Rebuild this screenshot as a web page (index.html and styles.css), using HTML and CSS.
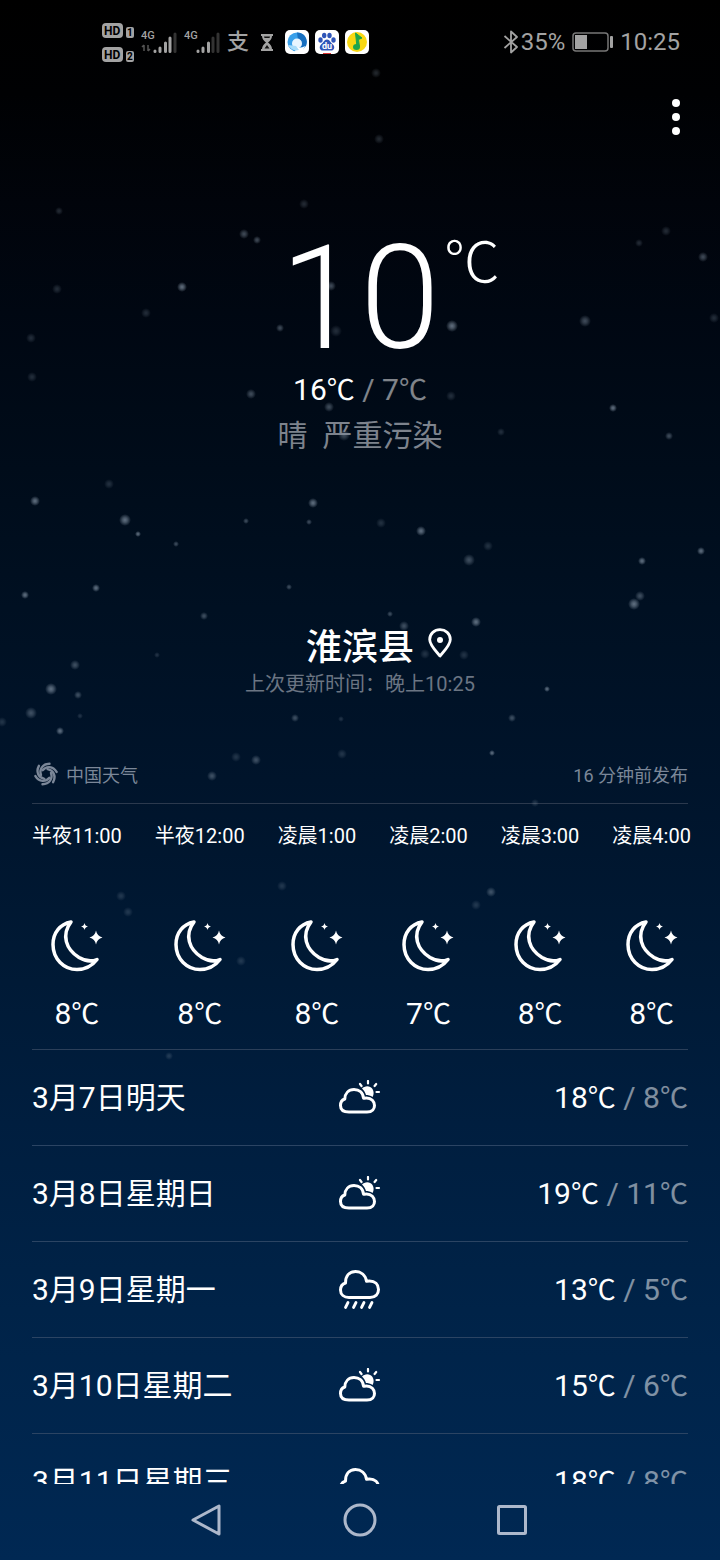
FILE: index.html
```html
<!DOCTYPE html>
<html lang="zh-CN">
<head>
<meta charset="utf-8">
<meta name="viewport" content="width=device-width, initial-scale=1">
<title>天气</title>
<link rel="stylesheet" href="styles.css">
</head>
<body>
<svg class="defs" aria-hidden="true">
  <defs>
    <radialGradient id="glow"><stop offset="0" stop-color="#8292a3"/><stop offset=".4" stop-color="#8292a3" stop-opacity=".7"/><stop offset="1" stop-color="#8292a3" stop-opacity="0"/></radialGradient>
    <symbol id="moon" viewBox="0 0 52 52">
      <path d="M20 2C9 4 2 13 2 24.500C2 39 13 49.500 26 49.500C34 49.500 41 46 46 39.500C40 42 34 41 28 37.500C15 29.500 10 15 20 2Z" fill="none" stroke="#fff" stroke-width="3.500" stroke-linejoin="round"/>
      <path d="M45 10.500Q46 16 51.500 17.500Q46 19 45 24.500Q44 19 38.500 17.500Q44 16 45 10.500Z" fill="#fff"/>
      <path d="M33.500 3Q34 6 37 6.500Q34 7 33.500 10Q33 7 30 6.500Q33 6 33.500 3Z" fill="#fff"/>
    </symbol>
    <symbol id="partly" viewBox="0 0 44 36">
      <path d="M11 32H29C34.500 32 36.500 28.500 36.500 25.500C36.500 21.500 33.500 18 28.500 18C27 18 26 18.200 25.500 18.200C25 12.500 21 9.500 16 9.500C10.500 9.500 7 13.500 6.800 19C3.500 20 2.500 22.500 2.500 25.500C2.500 29.500 5 32 11 32Z" fill="none" stroke="#fff" stroke-width="3" stroke-linejoin="round"/>
      <path d="M24 8.500C26.500 5.500 32 5 34.500 9C36 11.500 36 14.500 34.600 17C32.500 15.500 30 15 28 15C27.300 12.500 26 10.300 24 8.500Z" fill="#fff"/>
      <path d="M30 1V3.500M22 4L23.500 6M38.200 4L36.600 6M38.500 12H41" stroke="#fff" stroke-width="2.200" stroke-linecap="round"/>
    </symbol>
    <path id="cloud-shape" d="M11 28.500H32C37.500 28.500 40.500 25 40.500 20.500C40.500 15.500 37 12 31.500 12C30.500 12 29.500 12 28.500 12.300C27.500 6 23 2.500 17.500 2.500C11 2.500 7.500 7.500 7.500 14C4.500 15 2.500 18 2.500 21C2.500 25.500 6 28.500 11 28.500Z" fill="none" stroke="#fff" stroke-width="3" stroke-linejoin="round"/>
    <symbol id="rain" viewBox="0 0 44 42">
      <use href="#cloud-shape"/>
      <path d="M10 33.500L7.500 38.500M18 33.500L15.500 38.500M26 33.500L23.500 38.500M34 33.500L31.500 38.500" stroke="#fff" stroke-width="2.800" stroke-linecap="round"/>
    </symbol>
    <symbol id="cloud" viewBox="0 0 44 36">
      <use href="#cloud-shape" y="3"/>
    </symbol>
  </defs>
</svg>

<svg class="stars" viewBox="0 0 720 1560" preserveAspectRatio="xMidYMin slice" aria-hidden="true" fill="url(#glow)">
  <g opacity=".75"><circle cx="182" cy="287" r="5"/><circle cx="125" cy="520" r="6"/><circle cx="701" cy="551" r="4"/><circle cx="35" cy="501" r="5"/><circle cx="313" cy="503" r="5"/><circle cx="452" cy="326" r="6"/><circle cx="421" cy="531" r="5"/><circle cx="642" cy="561" r="4"/><circle cx="634" cy="604" r="6"/><circle cx="25" cy="595" r="4"/><circle cx="96" cy="588" r="4"/><circle cx="613" cy="408" r="4"/><circle cx="51" cy="689" r="6"/><circle cx="60" cy="731" r="4"/><circle cx="492" cy="753" r="3"/><circle cx="476" cy="622" r="5"/><circle cx="547" cy="689" r="3"/><circle cx="138" cy="534" r="3"/></g>
  <g opacity=".5"><circle cx="244" cy="234" r="5"/><circle cx="257" cy="240" r="4"/><circle cx="585" cy="321" r="6"/><circle cx="703" cy="257" r="5"/><circle cx="251" cy="394" r="5"/><circle cx="329" cy="407" r="5"/><circle cx="344" cy="435" r="6"/><circle cx="331" cy="286" r="5"/><circle cx="469" cy="560" r="6"/><circle cx="640" cy="596" r="5"/><circle cx="176" cy="544" r="3"/><circle cx="246" cy="521" r="3"/><circle cx="309" cy="522" r="3"/><circle cx="289" cy="587" r="3"/><circle cx="204" cy="616" r="4"/><circle cx="75" cy="665" r="5"/><circle cx="78" cy="695" r="4"/><circle cx="512" cy="718" r="4"/><circle cx="295" cy="718" r="4"/><circle cx="212" cy="776" r="5"/><circle cx="256" cy="760" r="5"/><circle cx="31" cy="713" r="6"/><circle cx="669" cy="436" r="4"/><circle cx="280" cy="328" r="4"/><circle cx="390" cy="614" r="3"/><circle cx="404" cy="626" r="5"/><circle cx="491" cy="892" r="5"/></g>
  <g opacity=".28"><circle cx="376" cy="73" r="5"/><circle cx="379" cy="139" r="5"/><circle cx="59" cy="211" r="4"/><circle cx="304" cy="204" r="5"/><circle cx="666" cy="231" r="5"/><circle cx="639" cy="243" r="4"/><circle cx="57" cy="289" r="5"/><circle cx="146" cy="313" r="5"/><circle cx="31" cy="338" r="5"/><circle cx="32" cy="377" r="5"/><circle cx="336" cy="331" r="6"/><circle cx="109" cy="484" r="5"/><circle cx="381" cy="523" r="5"/><circle cx="488" cy="546" r="5"/><circle cx="236" cy="757" r="5"/><circle cx="342" cy="754" r="5"/><circle cx="341" cy="719" r="3"/><circle cx="157" cy="655" r="3"/><circle cx="80" cy="716" r="3"/><circle cx="425" cy="654" r="5"/><circle cx="2" cy="722" r="5"/><circle cx="535" cy="803" r="4"/><circle cx="476" cy="905" r="5"/><circle cx="282" cy="886" r="5"/><circle cx="121" cy="896" r="5"/><circle cx="128" cy="912" r="5"/><circle cx="169" cy="1056" r="4"/><circle cx="451" cy="396" r="5"/><circle cx="464" cy="655" r="5"/><circle cx="714" cy="318" r="5"/><circle cx="501" cy="432" r="4"/><circle cx="241" cy="961" r="5"/></g>
</svg>

<header class="status">
  <div class="status-group">
    <svg class="hd" viewBox="0 0 32 40" width="32" height="40" aria-label="HD 1 HD 2">
      <rect x="0" y="1" width="21" height="15" rx="4" fill="#a3a3a3"/><text x="2" y="13" class="hd-text">HD</text>
      <rect x="24" y="5" width="8" height="11" rx="2" fill="#a3a3a3"/><text x="25" y="14" class="hd-num">1</text>
      <rect x="0" y="25" width="21" height="15" rx="4" fill="#a3a3a3"/><text x="2" y="37" class="hd-text">HD</text>
      <rect x="24" y="29" width="8" height="11" rx="2" fill="#a3a3a3"/><text x="25" y="38" class="hd-num">2</text>
    </svg>
    <svg class="signal" viewBox="0 0 36 24" width="36" height="24">
      <text x="0" y="9" class="net">4G</text>
      <g stroke-width="3" stroke-linecap="round" stroke="#a3a3a3"><path d="M14 21V21.500M19 18V21.500M24.500 13V21.500M29 8V21.500"/><path d="M34 4V21.500" stroke="#333"/></g>
      <path d="M3 15V21M7 15V21M1 17L3 15M9 19L7 21" stroke="#555" fill="none" stroke-width="1.500"/>
    </svg>
    <svg class="signal" viewBox="0 0 36 24" width="36" height="24">
      <text x="0" y="9" class="net">4G</text>
      <g stroke-width="3" stroke-linecap="round" stroke="#a3a3a3"><path d="M14 21V21.500M19 18V21.500M24.500 13V21.500"/><path d="M29 8V21.500M34 4V21.500" stroke="#333"/></g>
    </svg>
    <span class="pay">支</span>
    <svg class="glass" viewBox="0 0 12 17" width="12" height="17"><path d="M0 0H12V2H11C11 5 9 7 7 8.500C9 10 11 12 11 15H12V17H0V15H1C1 12 3 10 5 8.500C3 7 1 5 1 2H0Z" fill="#a3a3a3"/><path d="M3 2.500H9L8.500 4H3.500ZM6 11L8.500 14.500H3.500Z" fill="#111"/></svg>
    <div class="apps">
      <svg viewBox="0 0 24 24" width="24" height="24"><rect width="24" height="24" rx="5" fill="#fff"/><circle cx="12" cy="12" r="9.500" fill="#3aa0ea"/><path d="M12 2.500A9.500 9.500 0 0 1 21 16Q18 18 14 17Z" fill="#176fc0"/><circle cx="12" cy="13.500" r="5" fill="#e8f5ff"/><path d="M11 17Q16 19 20 16L17 22H10Z" fill="#fff"/><path d="M3 15Q7 22 14 20L11 16Z" fill="#a8dcfa"/></svg>
      <svg viewBox="0 0 24 24" width="24" height="24"><rect width="24" height="24" rx="5" fill="#fff"/><g fill="#2f55b8"><ellipse cx="5.500" cy="10" rx="2.200" ry="2.800"/><ellipse cx="9.200" cy="5.500" rx="2.200" ry="2.800"/><ellipse cx="14.500" cy="5.500" rx="2.200" ry="2.800"/><ellipse cx="18.500" cy="10" rx="2.200" ry="2.800"/><path d="M12 9.500C9 9.500 8.500 13 6 14.500C3.500 17 5 21 8.500 20.500H15.500C19 21 20.500 17 18 14.500C15.500 13 15 9.500 12 9.500Z"/></g><text x="7" y="19" class="du">du</text><path d="M8 23.500H16" stroke="#d33"/></svg>
      <svg viewBox="0 0 24 24" width="24" height="24"><rect width="24" height="24" rx="5" fill="#fff"/><circle cx="12" cy="12" r="10" fill="#f8d813"/><path d="M10.500 3L17 8L13.500 9.500L14.500 17H12Z" fill="#1ca54c" stroke="#1ca54c" stroke-linejoin="round"/><ellipse cx="11.500" cy="17" rx="3.500" ry="3" fill="#1ca54c"/></svg>
    </div>
  </div>
  <div class="status-group">
    <svg class="bt" viewBox="0 0 16 24" width="16" height="24"><path d="M1.500 6L14 17L8 22.500V1.500L14 7L1.500 18" fill="none" stroke="#a3a3a3" stroke-width="1.800" stroke-linejoin="round"/></svg>
    <span class="percent">35%</span>
    <svg class="battery" viewBox="0 0 41 20" width="41" height="20"><rect x="1" y="1" width="35" height="18" rx="3" fill="none" stroke="#777" stroke-width="1.500"/><rect x="3" y="3" width="12" height="14" fill="#a3a3a3"/><rect x="38" y="4" width="3" height="12" rx="1" fill="#a3a3a3"/></svg>
    <time class="clock">10:25</time>
  </div>
</header>

<div class="toolbar">
  <button class="more" aria-label="更多"><svg viewBox="0 0 8 38" width="8" height="38" fill="#fff"><circle cx="4" cy="5" r="4"/><circle cx="4" cy="19" r="4"/><circle cx="4" cy="33" r="4"/></svg></button>
</div>

<main class="weather">
  <section class="current">
    <h1 class="temp">10<span class="unit">℃</span></h1>
    <p class="range">16<span class="c">℃</span> <span class="dim">/ 7<span class="c">℃</span></span></p>
    <p class="condition">晴  严重污染</p>
  </section>

  <section class="place">
    <h2 class="city">淮滨县<svg class="pin" viewBox="0 0 24 30" width="24" height="30"><path d="M12 28C7 22 1.700 17 1.700 11.500C1.700 5.500 6.500 1.700 12 1.700S22.300 5.500 22.300 11.500C22.300 17 17 22 12 28Z" fill="none" stroke="#fff" stroke-width="2.800" stroke-linejoin="round"/><circle cx="12" cy="12" r="3" fill="#fff"/></svg></h2>
    <p class="updated">上次更新时间：晚上10:25</p>
  </section>

  <section class="source">
    <span class="provider">
      <svg viewBox="0 0 24 24" width="24" height="24" fill="none" stroke="#7b8798" stroke-width="2.400" stroke-linecap="round">
        <path id="arm" d="M7 13C5 7.500 8.500 2 15.500 1.800"/>
        <use href="#arm" transform="rotate(60 12 12)"/><use href="#arm" transform="rotate(120 12 12)"/><use href="#arm" transform="rotate(180 12 12)"/><use href="#arm" transform="rotate(240 12 12)"/><use href="#arm" transform="rotate(300 12 12)"/>
      </svg>
      中国天气
    </span>
    <span>16 分钟前发布</span>
  </section>

  <ul class="hours">
    <li><time>半夜11:00</time><svg class="moon"><use href="#moon"/></svg><span class="deg">8<span class="c">℃</span></span></li>
    <li><time>半夜12:00</time><svg class="moon"><use href="#moon"/></svg><span class="deg">8<span class="c">℃</span></span></li>
    <li><time>凌晨1:00</time><svg class="moon"><use href="#moon"/></svg><span class="deg">8<span class="c">℃</span></span></li>
    <li><time>凌晨2:00</time><svg class="moon"><use href="#moon"/></svg><span class="deg">7<span class="c">℃</span></span></li>
    <li><time>凌晨3:00</time><svg class="moon"><use href="#moon"/></svg><span class="deg">8<span class="c">℃</span></span></li>
    <li><time>凌晨4:00</time><svg class="moon"><use href="#moon"/></svg><span class="deg">8<span class="c">℃</span></span></li>
  </ul>

  <ul class="days">
    <li><span>3月7日明天</span><svg class="sky"><use href="#partly"/></svg><span class="temps">18<span class="c">℃</span> <span class="dim">/ 8<span class="c">℃</span></span></span></li>
    <li><span>3月8日星期日</span><svg class="sky"><use href="#partly"/></svg><span class="temps">19<span class="c">℃</span> <span class="dim">/ 11<span class="c">℃</span></span></span></li>
    <li><span>3月9日星期一</span><svg class="sky rainy"><use href="#rain"/></svg><span class="temps">13<span class="c">℃</span> <span class="dim">/ 5<span class="c">℃</span></span></span></li>
    <li><span>3月10日星期二</span><svg class="sky"><use href="#partly"/></svg><span class="temps">15<span class="c">℃</span> <span class="dim">/ 6<span class="c">℃</span></span></span></li>
    <li><span>3月11日星期三</span><svg class="sky"><use href="#cloud"/></svg><span class="temps">18<span class="c">℃</span> <span class="dim">/ 8<span class="c">℃</span></span></span></li>
  </ul>
</main>

<nav class="nav">
  <button aria-label="返回"><svg viewBox="0 0 36 36" width="36" height="36"><path d="M3 18L29 4V32Z"/></svg></button>
  <button aria-label="主屏幕"><svg viewBox="0 0 36 36" width="36" height="36"><circle cx="18" cy="18" r="15"/></svg></button>
  <button aria-label="最近任务"><svg viewBox="0 0 36 36" width="36" height="36"><rect x="4.500" y="4.500" width="27" height="27" rx="1"/></svg></button>
</nav>
</body>
</html>
```

FILE: styles.css
```css
* {
  box-sizing: border-box;
  margin: 0;
  padding: 0;
}

body {
  position: relative;
  display: flex;
  flex-direction: column;
  height: 100vh;
  overflow: hidden;
  background: linear-gradient(#000 0%, #000103 6%, #01040b 13%, #000712 20%, #000c1a 30%, #001022 39%, #00142b 50%, #001a36 63%, #001e3f 72%, #002348 84%, #002853 100%);
  color: #fff;
  font-family: Roboto, "Noto Sans CJK SC", sans-serif;
}

ul {
  list-style: none;
}

button {
  display: flex;
  border: 0;
  background: none;
}

.defs {
  position: absolute;
  width: 0;
  height: 0;
}

.stars {
  position: absolute;
  inset: 0;
  width: 100%;
  height: 100%;
}

.status {
  display: flex;
  flex: none;
  justify-content: space-between;
  align-items: center;
  height: 84px;
  padding: 0 40px 0 102px;
  color: #a3a3a3;
  font-size: 24px;
}

.status-group {
  display: flex;
  align-items: center;
}

.hd {
  margin-right: 7px;
}

.hd-text {
  font: 700 12px Roboto, sans-serif;
  fill: #000;
}

.hd-num {
  font: 700 10px Roboto, sans-serif;
  fill: #000;
}

.net {
  font: 500 11px Roboto, sans-serif;
  fill: #a3a3a3;
}

.signal {
  margin-right: 7px;
}

.pay {
  font-size: 22px;
  font-weight: 500;
  line-height: 24px;
}

.glass {
  margin: 0 12px;
}

.apps {
  display: flex;
  gap: 6px;
}

.du {
  font: 700 9px Roboto, sans-serif;
  fill: #fff;
}

.bt {
  margin-right: 2px;
}

.battery {
  margin: 0 7px;
}

.toolbar {
  display: flex;
  flex: none;
  justify-content: flex-end;
  padding: 14px 40px;
}

.weather {
  display: flex;
  flex: 1;
  flex-direction: column;
  min-height: 0;
  overflow: hidden;
  padding: 0 32px;
}

.current {
  flex: none;
  padding-top: 77px;
  text-align: center;
}

.temp {
  position: relative;
  width: max-content;
  margin: 0 auto;
  font-size: 144px;
  font-weight: 300;
  line-height: 144px;
}

.unit {
  position: absolute;
  top: 4px;
  left: 100%;
  padding-left: 4px;
  font-size: 56px;
  line-height: 64px;
}

.range {
  font-size: 30px;
  line-height: 38px;
}

.c {
  font-size: 28px;
  line-height: 1;
}

.dim {
  opacity: 0.5;
}

.condition {
  margin-top: 6px;
  color: #7d838d;
  font-size: 30px;
  line-height: 42px;
  white-space: pre;
}

.place {
  flex: none;
  padding: 168px 0 48px;
  text-align: center;
}

.city {
  position: relative;
  width: max-content;
  margin: 0 auto;
  font-size: 36px;
  font-weight: 500;
  line-height: 46px;
}

.pin {
  position: absolute;
  top: 3px;
  left: calc(100% + 14px);
}

.updated {
  color: #6b7583;
  font-size: 20px;
  line-height: 26px;
}

.source {
  display: flex;
  flex: none;
  justify-content: space-between;
  align-items: center;
  height: 59px;
  border-bottom: 1px solid #2b394d;
  color: #7b8798;
  font-size: 18px;
}

.provider {
  display: flex;
  align-items: center;
  gap: 8px;
  padding-left: 2px;
}

.hours {
  display: flex;
  flex: none;
  gap: 33px;
  padding: 17px 0 16px;
  border-bottom: 1px solid #2b3f59;
  white-space: nowrap;
}

.hours li {
  display: flex;
  flex: none;
  flex-direction: column;
  align-items: center;
}

.hours time {
  font-size: 20px;
  line-height: 30px;
}

.moon {
  width: 52px;
  height: 52px;
  margin: 69px 0 23px;
}

.deg {
  font-size: 30px;
  line-height: 38px;
}

.days li {
  display: grid;
  grid-template-columns: 1fr 44px 1fr;
  align-items: center;
  height: 96px;
  border-bottom: 1px solid #2b4463;
  font-size: 30px;
  line-height: 38px;
  white-space: nowrap;
}

.sky {
  width: 44px;
  height: 36px;
}

.rainy {
  height: 42px;
}

.temps {
  justify-self: end;
}

.nav {
  position: relative;
  display: flex;
  flex: none;
  justify-content: center;
  gap: 116px;
  height: 76px;
  padding: 18px 0 22px;
}

.nav svg {
  fill: none;
  stroke: #adb8cb;
  stroke-width: 3;
  stroke-linejoin: round;
}
```
